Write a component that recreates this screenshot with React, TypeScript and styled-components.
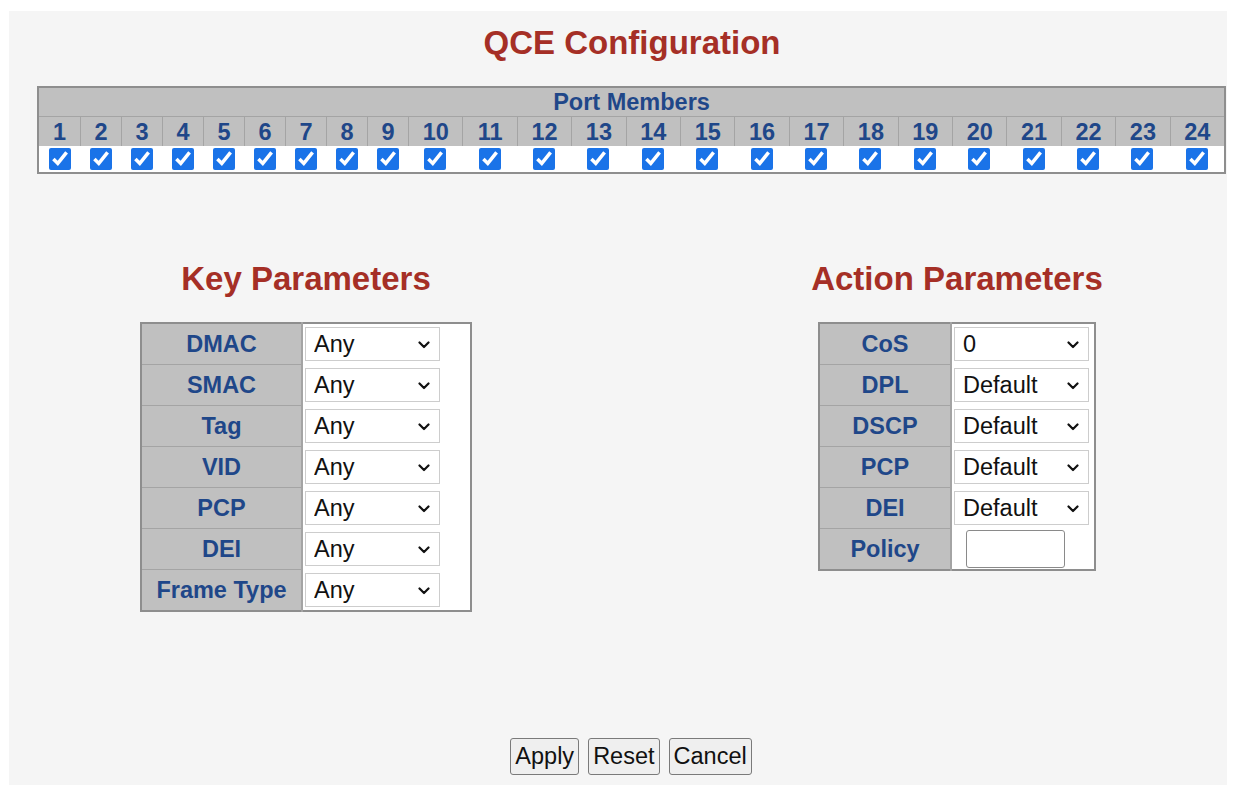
import React from "react";
import styled, { createGlobalStyle } from "styled-components";

const Global = createGlobalStyle`
  html, body { margin: 0; padding: 0; background: #ffffff; }
  body { font-family: "Liberation Sans", Arial, sans-serif; }
`;

const Panel = styled.div`
  margin: 11px 11px 0 9px;
  min-height: 774px;
  background: #f5f5f5;
  padding-top: 12px;
  box-sizing: border-box;
  display: flex;
  flex-direction: column;
`;

const Title = styled.h1`
  margin: 0;
  font-size: 33px;
  line-height: 40px;
  font-weight: bold;
  color: #a52f26;
  text-align: center;
  padding-left: 28px;
`;

const PortTable = styled.div`
  margin: 23px 1px 0 28px;
  border: 2px solid #8e8e8e;
  display: grid;
  grid-template-columns: repeat(9, 41px) repeat(15, 1fr);
  font-size: 23.5px;
  font-weight: bold;
  color: #1f4789;
`;

const PortHeader = styled.div`
  grid-column: 1 / -1;
  background: #c0c0c0;
  height: 28px;
  line-height: 28px;
  text-align: center;
  border-bottom: 1px solid #a4a4a4;
`;

const PortNumber = styled.div<{ $first?: boolean }>`
  background: #c0c0c0;
  height: 29px;
  line-height: 30px;
  text-align: center;
  border-left: ${(p) => (p.$first ? "none" : "1px solid #a4a4a4")};
`;

const PortCheckCell = styled.div`
  background: #ffffff;
  height: 26px;
  display: flex;
  align-items: center;
  justify-content: center;
`;

const Check = styled.input`
  margin: 0;
  width: 22px;
  height: 22px;
  accent-color: #1a73e8;
`;

const SectionRow = styled.div`
  margin-top: 85px;
  display: grid;
  grid-template-columns: 594px 540px;
  column-gap: 84px;
  align-items: start;
`;

const Section = styled.div`
  display: flex;
  flex-direction: column;
  align-items: center;
`;

const Heading = styled.h2`
  margin: 0;
  font-size: 33px;
  line-height: 40px;
  font-weight: bold;
  color: #a52f26;
`;

const ParamTable = styled.table`
  margin-top: 23px;
  border-collapse: collapse;
  border: 2px solid #8e8e8e;
`;

const LabelCell = styled.th<{ $w: number }>`
  width: ${(p) => p.$w}px;
  height: 40px;
  padding: 0;
  background: #c0c0c0;
  border-top: 1px solid #a4a4a4;
  border-right: 2px solid #a4a4a4;
  font-size: 23.5px;
  font-weight: bold;
  color: #1f4789;
  text-align: center;
  white-space: nowrap;
`;

const ValueCell = styled.td<{ $w: number }>`
  width: ${(p) => p.$w}px;
  height: 40px;
  padding: 0 0 0 2px;
  background: #ffffff;
  box-sizing: border-box;
`;

const SelectWrap = styled.div`
  position: relative;
  width: 135px;
  height: 34px;
`;

const Select = styled.select`
  display: block;
  width: 135px;
  height: 34px;
  margin: 0;
  padding: 0 24px 0 8px;
  font-family: "Liberation Sans", Arial, sans-serif;
  font-size: 23.5px;
  color: #111;
  background: #ffffff;
  border: 1px solid #cdcdcd;
  border-radius: 0;
  appearance: none;
  -webkit-appearance: none;
`;

const Chevron = styled.svg`
  position: absolute;
  right: 10px;
  top: 14px;
  width: 12px;
  height: 8px;
  pointer-events: none;
`;

const TextInput = styled.input`
  display: block;
  width: 99px;
  height: 38px;
  margin: 0 0 0 12px;
  padding: 0 4px;
  box-sizing: border-box;
  font-size: 23.5px;
  background: #ffffff;
  border: 1px solid #8a8a8a;
  border-radius: 3px;
`;

const ButtonBar = styled.div`
  margin-top: 126px;
  display: flex;
  justify-content: center;
  gap: 9px;
  padding-left: 26px;
`;

const Button = styled.button`
  height: 37px;
  padding: 0 4px;
  font-family: "Liberation Sans", Arial, sans-serif;
  font-size: 23.5px;
  color: #111;
  background: #efefef;
  border: 1px solid #7a7a7a;
  border-radius: 3px;
`;

const ports = Array.from({ length: 24 }, (_, i) => i + 1);

const keyParams = ["DMAC", "SMAC", "Tag", "VID", "PCP", "DEI", "Frame Type"];
const actionParams: { label: string; value: string | null }[] = [
  { label: "CoS", value: "0" },
  { label: "DPL", value: "Default" },
  { label: "DSCP", value: "Default" },
  { label: "PCP", value: "Default" },
  { label: "DEI", value: "Default" },
  { label: "Policy", value: null },
];

function Dropdown({ value }: { value: string }) {
  return (
    <SelectWrap>
      <Select defaultValue={value}>
        <option>{value}</option>
      </Select>
      <Chevron viewBox="0 0 12 8">
        <path d="M1.5 1.5 L6 6 L10.5 1.5" fill="none" stroke="#111" strokeWidth="2.2" strokeLinecap="round" strokeLinejoin="round" />
      </Chevron>
    </SelectWrap>
  );
}

export default function App() {
  return (
    <>
      <Global />
      <Panel>
        <Title>QCE Configuration</Title>
        <PortTable>
          <PortHeader>Port Members</PortHeader>
          {ports.map((p) => (
            <PortNumber key={`n${p}`} $first={p === 1}>
              {p}
            </PortNumber>
          ))}
          {ports.map((p) => (
            <PortCheckCell key={`c${p}`}>
              <Check type="checkbox" defaultChecked />
            </PortCheckCell>
          ))}
        </PortTable>

        <SectionRow>
          <Section>
            <Heading>Key Parameters</Heading>
            <ParamTable>
              <tbody>
                {keyParams.map((k) => (
                  <tr key={k}>
                    <LabelCell $w={159}>{k}</LabelCell>
                    <ValueCell $w={169}>
                      <Dropdown value="Any" />
                    </ValueCell>
                  </tr>
                ))}
              </tbody>
            </ParamTable>
          </Section>
          <Section>
            <Heading>Action Parameters</Heading>
            <ParamTable>
              <tbody>
                {actionParams.map((a) => (
                  <tr key={a.label}>
                    <LabelCell $w={130}>{a.label}</LabelCell>
                    <ValueCell $w={144}>
                      {a.value === null ? <TextInput type="text" /> : <Dropdown value={a.value} />}
                    </ValueCell>
                  </tr>
                ))}
              </tbody>
            </ParamTable>
          </Section>
        </SectionRow>

        <ButtonBar>
          <Button>Apply</Button>
          <Button>Reset</Button>
          <Button>Cancel</Button>
        </ButtonBar>
      </Panel>
    </>
  );
}
